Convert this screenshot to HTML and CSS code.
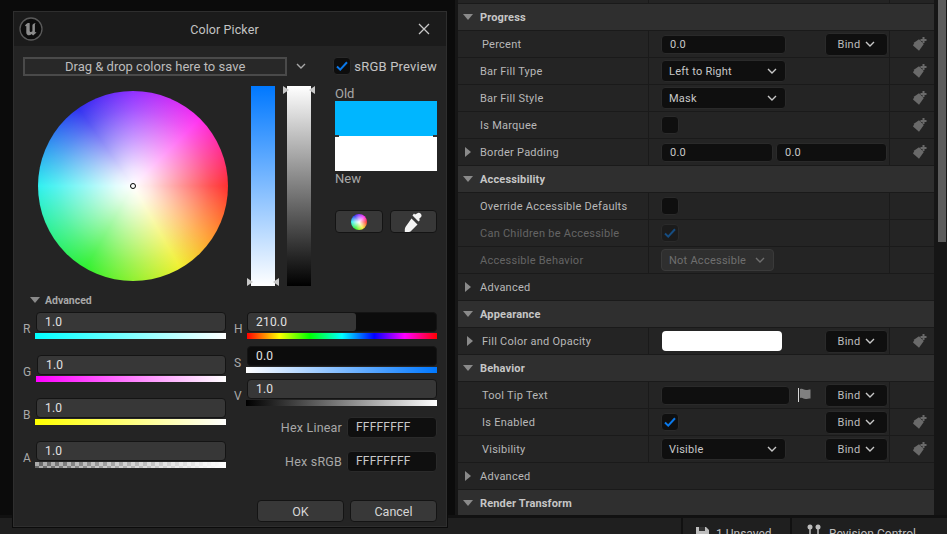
FILE: index.html
```html
<!DOCTYPE html>
<html lang="en">
<head>
<meta charset="utf-8">
<title>Color Picker</title>
<link rel="stylesheet" href="styles.css">
</head>
<body>
<svg class="defs" width="0" height="0" aria-hidden="true">
  <defs>
    <symbol id="key" viewBox="0 0 16 16">
      <path d="M7 3.2 11.8 8 7 14.8 1 9.4 2.6 6.2Z" fill="#6a6a6a"/>
      <path d="M11.5 1v6M8.5 4h6" stroke="#6a6a6a" stroke-width="2" fill="none"/>
    </symbol>
    <symbol id="chev" viewBox="0 0 10 6">
      <path d="M1 1 5 5 9 1" stroke="currentColor" stroke-width="1.4" fill="none"/>
    </symbol>
    <symbol id="check" viewBox="0 0 12 10">
      <path d="M1 5.5 4.2 8.6 11 1.2" stroke="currentColor" stroke-width="2" fill="none"/>
    </symbol>
  </defs>
</svg>

<div class="main">
  <div class="graph"></div>
  <section class="details">
    <div class="row row-top"><div class="cell name"></div><div class="cell value"></div><div class="cell keyc"></div></div>

    <div class="row head"><span class="twisty"><i class="tri-down"></i></span><span>Progress</span></div>
    <div class="row">
      <div class="cell name"><span class="twisty"></span><span class="label ind">Percent</span></div>
      <div class="cell value"><span class="input w124">0.0</span><span class="bind">Bind <svg class="chev"><use href="#chev"/></svg></span></div>
      <div class="cell keyc"><svg class="key"><use href="#key"/></svg></div>
    </div>
    <div class="row">
      <div class="cell name"><span class="twisty"></span><span class="label">Bar Fill Type</span></div>
      <div class="cell value"><span class="drop w124"><span>Left to Right</span><svg class="chev chev-l"><use href="#chev"/></svg></span></div>
      <div class="cell keyc"><svg class="key"><use href="#key"/></svg></div>
    </div>
    <div class="row">
      <div class="cell name"><span class="twisty"></span><span class="label">Bar Fill Style</span></div>
      <div class="cell value"><span class="drop w124"><span>Mask</span><svg class="chev chev-l"><use href="#chev"/></svg></span></div>
      <div class="cell keyc"><svg class="key"><use href="#key"/></svg></div>
    </div>
    <div class="row">
      <div class="cell name"><span class="twisty"></span><span class="label">Is Marquee</span></div>
      <div class="cell value"><span class="box"></span></div>
      <div class="cell keyc"><svg class="key"><use href="#key"/></svg></div>
    </div>
    <div class="row">
      <div class="cell name"><span class="twisty"><i class="tri-right"></i></span><span class="label">Border Padding</span></div>
      <div class="cell value pair"><span class="input w111">0.0</span><span class="input w110">0.0</span></div>
      <div class="cell keyc"><svg class="key"><use href="#key"/></svg></div>
    </div>

    <div class="row head"><span class="twisty"><i class="tri-down"></i></span><span>Accessibility</span></div>
    <div class="row">
      <div class="cell name"><span class="twisty"></span><span class="label">Override Accessible Defaults</span></div>
      <div class="cell value"><span class="box"></span></div>
      <div class="cell keyc"></div>
    </div>
    <div class="row">
      <div class="cell name"><span class="twisty"></span><span class="label off">Can Children be Accessible</span></div>
      <div class="cell value"><span class="box box-off"><svg class="tick"><use href="#check"/></svg></span></div>
      <div class="cell keyc"></div>
    </div>
    <div class="row">
      <div class="cell name"><span class="twisty"></span><span class="label off">Accessible Behavior</span></div>
      <div class="cell value"><span class="drop drop-off"><span>Not Accessible</span><svg class="chev chev-s"><use href="#chev"/></svg></span></div>
      <div class="cell keyc"></div>
    </div>
    <div class="row plain"><span class="twisty"><i class="tri-right"></i></span><span class="label">Advanced</span></div>

    <div class="row head"><span class="twisty"><i class="tri-down"></i></span><span>Appearance</span></div>
    <div class="row">
      <div class="cell name"><span class="twisty"><i class="tri-right tri-in"></i></span><span class="label ind">Fill Color and Opacity</span></div>
      <div class="cell value"><span class="swatch"></span><span class="bind">Bind <svg class="chev"><use href="#chev"/></svg></span></div>
      <div class="cell keyc"><svg class="key"><use href="#key"/></svg></div>
    </div>

    <div class="row head"><span class="twisty"><i class="tri-down"></i></span><span>Behavior</span></div>
    <div class="row">
      <div class="cell name"><span class="twisty"></span><span class="label ind">Tool Tip Text</span></div>
      <div class="cell value">
        <span class="input w128"></span>
        <svg class="flag" viewBox="0 0 14 14"><path d="M.5 0v14" stroke="#d8d8d8"/><path d="M2 1c3-1 4 1 6 1s3-.5 4.500-.5v9c-2 0-3 .5-5 .5s-3-2-5.500-1Z" fill="#808080"/></svg>
        <span class="bind">Bind <svg class="chev"><use href="#chev"/></svg></span>
      </div>
      <div class="cell keyc"></div>
    </div>
    <div class="row">
      <div class="cell name"><span class="twisty"></span><span class="label ind">Is Enabled</span></div>
      <div class="cell value"><span class="box"><svg class="tick tick-on"><use href="#check"/></svg></span><span class="bind">Bind <svg class="chev"><use href="#chev"/></svg></span></div>
      <div class="cell keyc"><svg class="key"><use href="#key"/></svg></div>
    </div>
    <div class="row">
      <div class="cell name"><span class="twisty"></span><span class="label ind">Visibility</span></div>
      <div class="cell value"><span class="drop w124"><span>Visible</span><svg class="chev chev-l"><use href="#chev"/></svg></span><span class="bind">Bind <svg class="chev"><use href="#chev"/></svg></span></div>
      <div class="cell keyc"><svg class="key"><use href="#key"/></svg></div>
    </div>
    <div class="row plain"><span class="twisty"><i class="tri-right"></i></span><span class="label">Advanced</span></div>

    <div class="row head"><span class="twisty"><i class="tri-down"></i></span><span>Render Transform</span></div>
  </section>
  <div class="scroll"><div class="thumb"></div></div>
</div>

<footer class="status">
  <div class="status-fill"></div>
  <div class="status-item unsaved">
    <svg class="disk" viewBox="0 0 13 13"><path d="M0 0h10l3 3v10H0Z" fill="#bdbdbd"/><path d="M3 0h6v4H3Z" fill="#333"/></svg>
    <span>1 Unsaved</span>
  </div>
  <div class="status-item revision">
    <svg class="branch" viewBox="0 0 14 13"><circle cx="3" cy="3" r="2.500" fill="#bdbdbd"/><circle cx="11" cy="3" r="2.500" fill="#bdbdbd"/><path d="M3 5v8M11 5v8" stroke="#bdbdbd" stroke-width="1.500"/></svg>
    <span>Revision Control</span>
  </div>
</footer>

<div class="window">
  <header class="titlebar">
    <svg class="logo" viewBox="0 0 24 24">
      <circle cx="12" cy="12" r="11" fill="#0c0c0c" stroke="#5a5a5a" stroke-width="1.300"/>
      <path d="M8 6.500c-1.500 1-2 2-2 3 .8-.6 1.200-.6 1.300 0v6.200c0 1.500 1.200 2.600 2.700 2.600 1 0 1.800-.4 2.500-1.200l1.600 1.400 3.400-3-.8-.6-.8.7V8c0-1 .4-1.600 1-2-1.500.2-3.500 1.200-3.500 2.500v5.800c-.6.500-1.400.8-2 .6-.5-.1-.7-.5-.7-1.100V6.200c-.9-.2-1.900 0-2.700.3Z" fill="#8c8c8c"/>
    </svg>
    <h1 class="title">Color Picker</h1>
    <svg class="close" viewBox="0 0 12 12"><path d="M1 1 11 11M11 1 1 11" stroke="#c8c8c8" stroke-width="1.300"/></svg>
  </header>

  <div class="win-body">
    <div class="toprow">
      <div class="dropzone">Drag &amp; drop colors here to save</div>
      <svg class="zone-chev"><use href="#chev"/></svg>
      <span class="box srgb-box"><svg class="tick tick-on"><use href="#check"/></svg></span>
      <span class="srgb">sRGB Preview</span>
    </div>

    <div class="picker">
      <div class="wheel"><span class="wheel-dot"></span></div>
      <div class="vbar vbar-sat"></div>
      <div class="vbar vbar-val"></div>
      <div class="preview">
        <span class="pv-label">Old</span>
        <div class="pv-swatches"><div class="pv-old"></div><div class="pv-new"></div></div>
        <span class="pv-label pv-label-new">New</span>
        <div class="pv-buttons">
          <button class="pv-btn"><span class="mini-wheel"></span></button>
          <button class="pv-btn">
            <svg class="dropper" viewBox="0 0 20 20"><path d="M13 1.500c1-1 2.500-1 3.500 0s1.500 2.500.5 3.500l-2 2 1 1-1.500 1.500-6-6L10 1.500l1 1ZM7.500 6.500l6 6-7 7c-1 .5-2 .5-3 .5H.8v-2.500c0-1 .3-2 1-3Z" fill="#f4f4f4"/></svg>
          </button>
        </div>
      </div>
    </div>

    <div class="adv"><i class="tri-down"></i><span>Advanced</span></div>

    <div class="sliders">
      <div class="col col-rgb">
        <div class="sl"><span class="sl-label">R</span><div class="sl-stack"><div class="sl-input">1.0</div><div class="bar bar-r"></div></div></div>
        <div class="sl"><span class="sl-label">G</span><div class="sl-stack nudge"><div class="sl-input">1.0</div><div class="bar bar-g"></div></div></div>
        <div class="sl"><span class="sl-label">B</span><div class="sl-stack"><div class="sl-input">1.0</div><div class="bar bar-b"></div></div></div>
        <div class="sl"><span class="sl-label">A</span><div class="sl-stack"><div class="sl-input">1.0</div><div class="bar bar-a"></div></div></div>
      </div>
      <div class="col col-hsv">
        <div class="sl"><span class="sl-label">H</span><div class="sl-stack nudge"><div class="sl-input sl-h"><span>210.0</span></div><div class="bar bar-h"></div></div></div>
        <div class="sl"><span class="sl-label">S</span><div class="sl-stack"><div class="sl-input sl-s">0.0</div><div class="bar bar-s"></div></div></div>
        <div class="sl"><span class="sl-label">V</span><div class="sl-stack"><div class="sl-input">1.0</div><div class="bar bar-v"></div></div></div>
        <div class="hex hex-first"><span class="hex-label">Hex Linear</span><span class="hex-input">FFFFFFFF</span></div>
        <div class="hex"><span class="hex-label">Hex sRGB</span><span class="hex-input">FFFFFFFF</span></div>
      </div>
    </div>

    <div class="actions">
      <button class="act">OK</button>
      <button class="act">Cancel</button>
    </div>
  </div>
</div>
</body>
</html>
```
FILE: styles.css
```css
* { box-sizing: border-box; }
html, body { margin: 0; height: 100%; }
body {
  width: 947px;
  height: 534px;
  overflow: hidden;
  position: relative;
  background: #111;
  font-family: Roboto, "Liberation Sans", sans-serif;
  font-size: 11px;
  color: #b8b8b8;
}
.defs { position: absolute; }
i { display: block; }

/* page frame */
.main { display: flex; height: 515px; background: #161616; }
.graph {
  width: 455px;
  flex: none;
  background-color: #242424;
  background-image:
    linear-gradient(#0b0b0b, #0b0b0b),
    linear-gradient(#0b0b0b, #0b0b0b),
    linear-gradient(#333, #333),
    linear-gradient(#333, #333);
  background-size: 2px 100%, 100% 2px, 1px 100%, 100% 1px;
  background-size: 2px 140px, 140px 2px, 1px 14px, 14px 1px;
  background-position: 125px 0, 0 2px, 13px 0, 0 15px;
  background-repeat: repeat;
}
.details { width: 476px; margin-left: 3px; flex: none; overflow: hidden; background: #242424; }
.scroll { width: 13px; padding-left: 4px; flex: none; }
.thumb { width: 8px; height: 242px; background: #5c5c5c; }

/* status bar */
.status {
  display: flex;
  height: 30px;
  margin-top: 3px;
  background: #1f1f1f;
}
.status-fill { width: 683px; flex: none; border-right: 2px solid #111; }
.status-item { display: flex; align-items: flex-start; padding-top: 9px; font-size: 12px; color: #bdbdbd; }
.unsaved { width: 109px; padding-left: 13px; gap: 7px; border-right: 2px solid #111; }
.revision { padding-left: 15px; gap: 8px; }
.disk { width: 13px; height: 13px; }
.branch { width: 14px; height: 13px; margin-top: -3px; }

/* details rows */
.row {
  display: grid;
  grid-template-columns: 190px 241px 45px;
  height: 27px;
  border-bottom: 1px solid #1a1a1a;
}
.row-top { height: 4px; }
.head, .plain { display: flex; align-items: center; padding-left: 5px; }
.head { background: #2f2f2f; font-weight: 700; color: #c6c6c6; letter-spacing: .15px; }
.plain { background: #242424; }
.cell { display: flex; align-items: center; min-width: 0; }
.name { padding-left: 5px; }
.value { border-left: 1px solid #1a1a1a; padding-left: 12px; padding-right: 1px; }
.keyc { border-left: 1px solid #1a1a1a; justify-content: flex-end; padding-right: 6px; }
.twisty { width: 17px; flex: none; display: flex; }
.label { letter-spacing: .25px; white-space: nowrap; }
.ind { margin-left: 2px; }
.off { color: #646464; }
.tri-down { width: 0; height: 0; border: 5px solid transparent; border-top: 6px solid #8a8a8a; border-bottom: 0; }
.tri-right { width: 0; height: 0; margin-left: 2px; border: 5px solid transparent; border-left: 6px solid #8a8a8a; border-right: 0; }
.tri-in { margin-left: 4px; }

.input, .drop, .bind, .box {
  background: #0f0f0f;
  border: 1px solid #2a2a2a;
  border-radius: 4px;
  color: #c8c8c8;
  letter-spacing: .25px;
  display: flex;
  align-items: center;
  flex: none;
}
.input { height: 19px; padding-left: 8px; }
.w124 { width: 125px; }
.w128 { width: 129px; }
.w111 { width: 112px; }
.w110 { width: 111px; }
.pair { gap: 3px; }
.drop { height: 22px; padding: 0 8px 0 7px; justify-content: space-between; }
.drop-off { width: 113px; background: #2f2f2f; border-color: #3a3a3a; color: #6f6f6f; }
.bind { width: 63px; height: 23px; margin-left: auto; justify-content: center; gap: 5px; color: #bdbdbd; }
.box { width: 18px; height: 18px; justify-content: center; }
.box-off { background: #1b1b1b; }
.chev { width: 10px; height: 6px; color: #c8c8c8; }
.chev-s { color: #6f6f6f; }
.swatch { width: 120px; height: 20px; margin-left: 1px; background: #fff; border-radius: 4px; flex: none; }
.tick { width: 12px; height: 10px; color: #164c80; }
.tick-on { color: #0a78ea; }
.flag { width: 14px; height: 14px; margin-left: 8px; flex: none; }
.key { width: 16px; height: 16px; }

/* floating window */
.window {
  position: absolute;
  left: 13px;
  top: 11px;
  width: 434px;
  height: 516px;
  display: flex;
  flex-direction: column;
  background: #242424;
  border: 1px solid #2e2e2e;
  box-shadow: 0 0 0 1px #0b0b0b;
}
.titlebar { height: 34px; flex: none; display: flex; align-items: center; background: #1b1b1b; padding: 0 16px 0 5px; }
.logo { width: 24px; height: 24px; flex: none; }
.title { flex: 1; margin: 0; font-size: 12.5px; font-weight: 400; color: #c4c4c4; text-align: center; padding-right: 20px; padding-left: 8px; letter-spacing: .1px; }
.close { width: 12px; height: 12px; flex: none; }

.win-body { flex: 1; display: flex; flex-direction: column; padding: 10px 9px 4px; min-height: 0; }
.toprow { display: flex; align-items: center; height: 20px; flex: none; }
.dropzone {
  width: 266px;
  height: 19px;
  border: 2px solid #4a4a4a;
  background: #282828;
  color: #bcbcbc;
  font-size: 13px;
  line-height: 15px;
  text-align: center;
}
.zone-chev { width: 10px; height: 6px; margin-left: 9px; color: #a8a8a8; flex: none; }
.srgb-box { margin-left: 27px; background: #0d0d0d; }
.srgb { margin-left: 3px; font-size: 13px; color: #c4c4c4; white-space: nowrap; letter-spacing: .2px; }

.picker { display: flex; height: 200px; margin-top: 10px; flex: none; }
.wheel {
  width: 190px;
  height: 190px;
  margin: 5px 23px 0 15px;
  flex: none;
  border-radius: 50%;
  position: relative;
  background:
    radial-gradient(circle closest-side, #fff 0, rgba(255,255,255,.86) 18%, rgba(255,255,255,.5) 50%, rgba(255,255,255,.18) 80%, rgba(255,255,255,0) 100%),
    conic-gradient(#9030ff 0deg, #ff30f0 45deg, #ff3030 90deg, #ffa030 125deg, #f0f030 150deg, #30f030 210deg, #30f0f0 270deg, #3030f0 325deg, #9030ff 360deg);
}
.wheel-dot {
  position: absolute;
  left: 92px;
  top: 92px;
  width: 6px;
  height: 6px;
  border: 1.500px solid #000;
  border-radius: 50%;
  background: #fff;
}
.vbar { width: 24px; height: 200px; flex: none; position: relative; }
.vbar::before, .vbar::after {
  content: "";
  position: absolute;
  width: 0;
  height: 0;
  border-style: solid;
  border-color: transparent;
}
.vbar-sat { background: linear-gradient(#0078ff, #fff); }
.vbar-sat::before { left: -4px; bottom: 0; border-width: 4px 0 4px 6px; border-left-color: #c8c8c8; }
.vbar-sat::after { right: -4px; bottom: 0; border-width: 4px 6px 4px 0; border-right-color: #c8c8c8; }
.vbar-val { margin-left: 12px; background: linear-gradient(#fff, #000); }
.vbar-val::before { left: -4px; top: 0; border-width: 4px 0 4px 6px; border-left-color: #c8c8c8; }
.vbar-val::after { right: -4px; top: 0; border-width: 4px 6px 4px 0; border-right-color: #c8c8c8; }

.preview { width: 102px; margin-left: 24px; flex: none; display: flex; flex-direction: column; }
.pv-label { height: 15px; line-height: 15px; font-size: 13px; color: #a8a8a8; }
.pv-swatches { position: relative; }
.pv-swatches::before, .pv-swatches::after {
  content: "";
  position: absolute;
  top: 34px;
  width: 4px;
  height: 2px;
  background: #333;
}
.pv-swatches::before { left: 0; }
.pv-swatches::after { right: 0; }
.pv-old { height: 35px; background: #00b6ff; }
.pv-new { height: 35px; background: #fff; }
.pv-label-new { margin-top: 0; }
.pv-buttons { display: flex; justify-content: space-between; margin-top: 24px; }
.pv-btn {
  width: 48px;
  height: 23px;
  padding: 0;
  background: #383838;
  border: 1px solid #141414;
  border-radius: 4px;
  display: flex;
  align-items: center;
  justify-content: center;
}
.pv-btn + .pv-btn { width: 47px; }
.mini-wheel {
  width: 16px;
  height: 16px;
  border-radius: 50%;
  background:
    radial-gradient(circle closest-side, #fff 0, rgba(255,255,255,.6) 40%, rgba(255,255,255,0) 100%),
    conic-gradient(#9030ff, #ff30f0 45deg, #ff3030 90deg, #f0f030 150deg, #30f030 210deg, #30f0f0 270deg, #3030f0 325deg, #9030ff);
}
.dropper { width: 20px; height: 20px; }

.adv { display: flex; align-items: center; gap: 5px; height: 12px; margin-top: 8px; padding-left: 7px; flex: none; font-weight: 700; font-size: 10.500px; color: #a8a8a8; }

.sliders { display: grid; grid-template-columns: 203px 203px; column-gap: 8px; margin-top: 6px; flex: none; }
.col { display: flex; flex-direction: column; }
.col-rgb { gap: 16px; }
.col-hsv { gap: 6.500px; }
.sl { display: flex; }
.sl-label { width: 12px; flex: none; padding-top: 10px; font-size: 12px; line-height: 14px; color: #a8a8a8; }
.sl-stack { flex: 1; display: flex; flex-direction: column; min-width: 0; }
.nudge { margin-left: 1px; }
.sl-input {
  height: 20px;
  margin-left: 1px;
  padding-left: 8px;
  background: #373737;
  border: 1px solid #141414;
  border-radius: 4px;
  color: #e2e2e2;
  font-size: 12px;
  line-height: 18px;
  letter-spacing: .2px;
}
.sl-h { background: #0c0c0c; padding-left: 0; position: relative; margin-left: 0; }
.sl-h span { display: block; width: 108px; height: 18px; padding-left: 8px; background: #373737; border-radius: 3px; }
.sl-s { background: #0c0c0c; }
.bar { height: 6px; margin-top: 1px; }
.bar-r { background: linear-gradient(90deg, #0ff, #fff); }
.bar-g { background: linear-gradient(90deg, #f0f, #fff); }
.bar-b { background: linear-gradient(90deg, #ff0, #fff); }
.bar-a {
  background:
    linear-gradient(90deg, rgba(255,255,255,0), #fff),
    conic-gradient(#666 25%, #aaa 0 50%, #666 0 75%, #aaa 0) 0 0 / 8px 8px;
}
.bar-h { background: linear-gradient(90deg, #f00, #ff0 17%, #0f0 33%, #0ff 50%, #00f 67%, #f0f 83%, #f00); }
.bar-s { background: linear-gradient(90deg, #fff, #0078ff); }
.bar-v { background: linear-gradient(90deg, #000, #fff); }

.hex { display: flex; align-items: center; justify-content: flex-end; margin-top: 6.500px; }
.hex-first { margin-top: 4.500px; }
.hex-label { margin-right: 5px; font-size: 12.500px; color: #a8a8a8; letter-spacing: .2px; }
.hex-input {
  width: 90px;
  height: 21px;
  padding-left: 8px;
  background: #0f0f0f;
  border: 1px solid #2a2a2a;
  border-radius: 4px;
  font-size: 12px;
  line-height: 18px;
  color: #c8c8c8;
  letter-spacing: .2px;
}

.actions { margin-top: auto; display: flex; justify-content: flex-end; gap: 6px; }
.act {
  width: 87px;
  height: 22px;
  padding: 0;
  background: #383838;
  border: 1px solid #141414;
  border-radius: 4px;
  color: #d6d6d6;
  font-family: inherit;
  font-size: 12.500px;
}
```
